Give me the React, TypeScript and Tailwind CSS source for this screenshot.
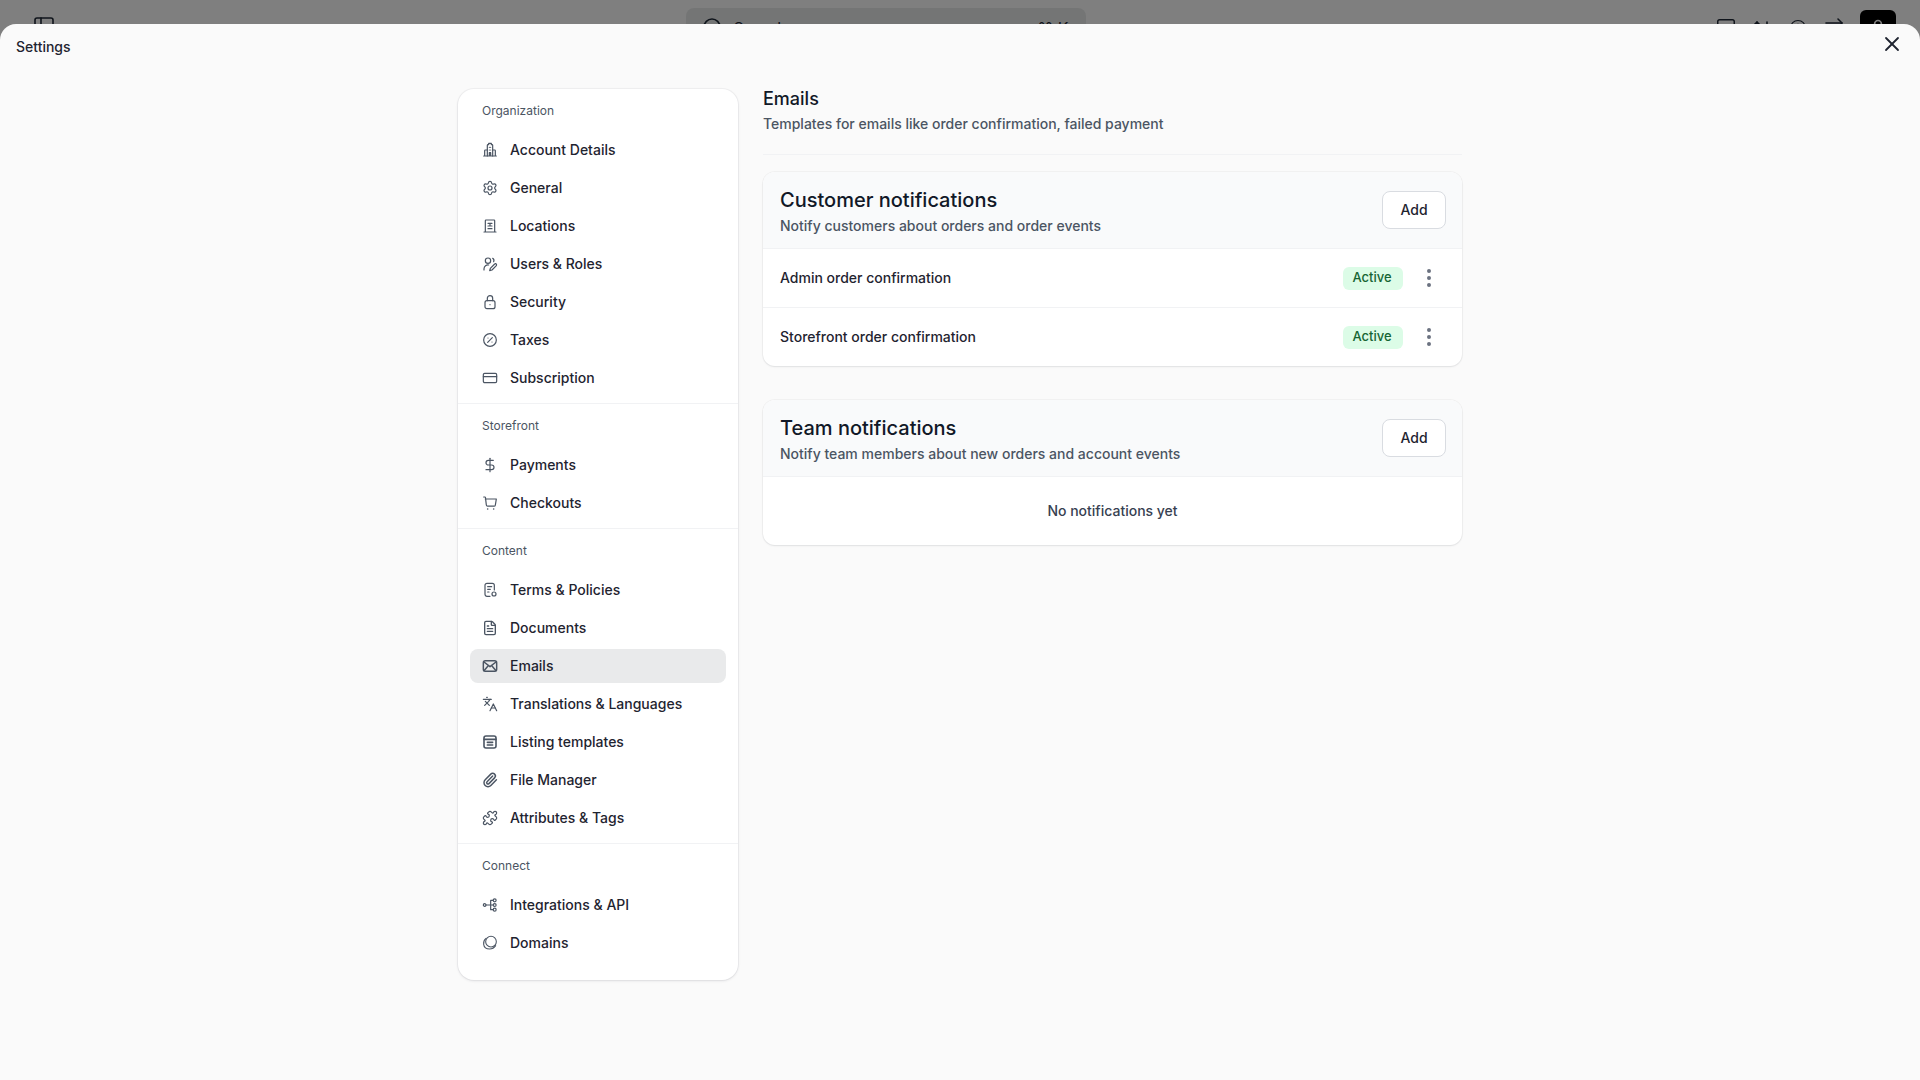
import {
  ArrowRightLeft,
  ArrowUpDown,
  CircleHelp,
  CreditCard,
  DollarSign,
  EllipsisVertical,
  FileText,
  Languages,
  PanelLeft,
  Paperclip,
  Puzzle,
  Search,
  Settings,
  Square,
  User,
  X,
  type LucideIcon,
} from 'lucide-react';
import type { ReactNode } from 'react';

const iconCls = 'size-4 shrink-0 text-[#4b5563]';

const svgProps = {
  viewBox: '0 0 24 24',
  fill: 'none',
  stroke: 'currentColor',
  strokeWidth: 1.8,
  strokeLinecap: 'round' as const,
  strokeLinejoin: 'round' as const,
  className: iconCls,
};

const TowerIcon = () => (
  <svg {...svgProps}>
    <path d="M8 21V5a1 1 0 0 1 1-1h1V2h4v2h1a1 1 0 0 1 1 1v16" />
    <path d="M8 12H5a1 1 0 0 0-1 1v8M16 12h3a1 1 0 0 1 1 1v8M2.500 21h19M11 8h.01M13 8h.01M11 12h.01M13 12h.01M11 16h2v5h-2z" />
  </svg>
);

const BuildingIcon = () => (
  <svg {...svgProps}>
    <path d="M3 21h18M5 21V4a1 1 0 0 1 1-1h12a1 1 0 0 1 1 1v17" />
    <path d="M9 8h6M9 12h6M12 8v4M9 16h6" />
  </svg>
);

const UserPenIcon = () => (
  <svg {...svgProps}>
    <circle cx="9" cy="7" r="4" />
    <path d="M3 21v-2a6 6 0 0 1 7-5.500M16 3.500a4 4 0 0 1 1.500 5" />
    <path d="M20.500 11.500a2 2 0 0 1 1 3L15 21l-3.500 1 1-3.500 6.500-6.500a1.500 1.500 0 0 1 1.500-.5z" />
  </svg>
);

const LockDotIcon = () => (
  <svg {...svgProps}>
    <rect x="4.500" y="10" width="15" height="12" rx="3" />
    <path d="M8 10V6.500a4 4 0 0 1 8 0V10M12 16h.01" />
  </svg>
);

const PercentCircleIcon = () => (
  <svg {...svgProps}>
    <circle cx="12" cy="12" r="9.500" />
    <path d="M15.500 8.500l-7 7M9 9h.01M15 15h.01" />
  </svg>
);

const BasketIcon = () => (
  <svg {...svgProps}>
    <path d="M2.500 3h1.700a1 1 0 0 1 1 .9L6.500 15a2 2 0 0 0 2 1.800h9.500a2 2 0 0 0 2-1.600L21.500 6H5" />
    <path d="M8.500 21h.01M17.500 21h.01" strokeWidth={2.4} />
  </svg>
);

const PolicyIcon = () => (
  <svg {...svgProps}>
    <path d="M12 21.500H7.500a3 3 0 0 1-3-3V5a3 3 0 0 1 3-3h8a3 3 0 0 1 3 3v7" />
    <path d="M8.500 7h6M8.500 11h4M8.500 15h2" />
    <circle cx="18" cy="18" r="3" />
  </svg>
);

const MailFlapIcon = () => (
  <svg {...svgProps} strokeWidth={2.2}>
    <rect x="2" y="4" width="20" height="16" rx="3" />
    <path d="M3 6l9 7 9-7M3 19l6-7M21 19l-6-7" />
  </svg>
);

const ListPanelIcon = () => (
  <svg {...svgProps} strokeWidth={2.4}>
    <rect x="3" y="3" width="18" height="18" rx="3" />
    <path d="M3 8h18M8 12.500h8M8 16.500h8" />
  </svg>
);

const FlowIcon = () => (
  <svg {...svgProps}>
    <circle cx="4" cy="12" r="2" />
    <circle cx="19" cy="5" r="2.200" />
    <circle cx="19" cy="12" r="2.200" />
    <circle cx="19" cy="19" r="2.200" />
    <path d="M6 12h10.800M13 5h3.800M13 19h3.800M13 5v14" />
  </svg>
);

const PlanetIcon = () => (
  <svg {...svgProps} strokeWidth={1.6}>
    <circle cx="13.500" cy="10" r="8" />
    <path d="M6 5C3.500 7 2 10 2.500 14c.5 4 4 7 9 7 4 0 7-2 9-5" />
  </svg>
);

const lucide = (Icon: LucideIcon, strokeWidth = 1.8) => (
  <Icon className={iconCls} strokeWidth={strokeWidth} />
);

interface NavGroup {
  title: string;
  items: { label: string; icon: ReactNode; active?: boolean }[];
}

const navGroups: NavGroup[] = [
  {
    title: 'Organization',
    items: [
      { label: 'Account Details', icon: <TowerIcon /> },
      { label: 'General', icon: lucide(Settings) },
      { label: 'Locations', icon: <BuildingIcon /> },
      { label: 'Users & Roles', icon: <UserPenIcon /> },
      { label: 'Security', icon: <LockDotIcon /> },
      { label: 'Taxes', icon: <PercentCircleIcon /> },
      { label: 'Subscription', icon: lucide(CreditCard) },
    ],
  },
  {
    title: 'Storefront',
    items: [
      { label: 'Payments', icon: lucide(DollarSign) },
      { label: 'Checkouts', icon: <BasketIcon /> },
    ],
  },
  {
    title: 'Content',
    items: [
      { label: 'Terms & Policies', icon: <PolicyIcon /> },
      { label: 'Documents', icon: lucide(FileText, 2) },
      { label: 'Emails', icon: <MailFlapIcon />, active: true },
      { label: 'Translations & Languages', icon: lucide(Languages) },
      { label: 'Listing templates', icon: <ListPanelIcon /> },
      { label: 'File Manager', icon: lucide(Paperclip, 2.2) },
      { label: 'Attributes & Tags', icon: lucide(Puzzle) },
    ],
  },
  {
    title: 'Connect',
    items: [
      { label: 'Integrations & API', icon: <FlowIcon /> },
      { label: 'Domains', icon: <PlanetIcon /> },
    ],
  },
];

const SettingsNav = () => (
  <nav className="mt-px w-[280px] shrink-0 self-start rounded-2xl bg-white pb-3 shadow-[0_0_0_1px_rgba(17,24,39,0.04),0_1px_3px_rgba(17,24,39,0.1)]">
    {navGroups.map((group, index) => (
      <div
        key={group.title}
        className={index > 0 ? 'border-t border-[#f1f2f4] px-3 pt-[5px] pb-2' : 'px-3 pt-[5px] pb-2'}
      >
        <p className="flex h-[34px] items-center px-3 text-xs text-[#4b5563]">{group.title}</p>
        <ul className="mt-[5px] flex flex-col gap-1">
          {group.items.map((item) => (
            <li
              key={item.label}
              className={
                item.active
                  ? 'flex h-[34px] items-center gap-3 rounded-lg bg-[#e9eaeb] px-3 text-sm font-medium text-[#1f2430]'
                  : 'flex h-[34px] items-center gap-3 rounded-lg px-3 text-sm font-medium text-[#1f2430]'
              }
            >
              {item.icon}
              {item.label}
            </li>
          ))}
        </ul>
      </div>
    ))}
  </nav>
);

const NotificationRow = ({ label }: { label: string }) => (
  <div className="flex h-[59px] items-center justify-between border-t border-[#f1f2f4] pr-[17px] pl-[17px]">
    <span className="text-sm font-medium text-[#1f2430]">{label}</span>
    <div className="flex items-center gap-[10px]">
      <span className="flex h-[23px] w-[60px] items-center justify-center rounded-md bg-[#dcfce7] pr-[2px] text-[13px] font-medium text-[#166534]">
        Active
      </span>
      <span className="flex size-8 items-center justify-center text-[#6b7280]">
        <EllipsisVertical className="size-6" strokeWidth={2} />
      </span>
    </div>
  </div>
);

interface NotificationCardProps {
  title: string;
  description: string;
  children: ReactNode;
}

const NotificationCard = ({ title, description, children }: NotificationCardProps) => (
  <section className="overflow-hidden rounded-xl bg-white shadow-[0_0_0_1px_rgba(17,24,39,0.035),0_1px_2px_rgba(17,24,39,0.08)]">
    <header className="flex h-[76px] items-center justify-between bg-[#f9fafb] pr-4 pl-[17px]">
      <div className="pt-[2px]">
        <h2 className="text-[20px] leading-7 font-medium text-[#111827]">{title}</h2>
        <p className="mt-[2px] text-sm leading-5 font-medium text-[#4b5563]">{description}</p>
      </div>
      <button className="h-[38px] w-[64px] rounded-lg border border-[#d9dce1] bg-white text-sm font-medium text-[#1f2430]">
        Add
      </button>
    </header>
    {children}
  </section>
);

const BackdropBar = () => (
  <div className="flex h-[60px] items-start justify-between bg-white pr-6 pl-8 text-[#1f2937]">
    <PanelLeft className="mt-[15px] size-6" strokeWidth={1.6} />
    <div className="mt-2 ml-[7px] flex h-10 w-[400px] items-center gap-[9px] rounded-lg bg-[#e9ebeb] pr-[17px] pl-[15px] text-base">
      <Search className="size-6" strokeWidth={1.6} />
      <span>Search</span>
      <span className="ml-auto">⌘ K</span>
    </div>
    <div className="mt-[10px] flex items-center">
      <span className="flex w-9 justify-center">
        <Square className="size-[22px]" strokeWidth={1.6} />
      </span>
      <span className="flex w-9 justify-center pt-1">
        <ArrowUpDown className="size-6" strokeWidth={1.6} />
      </span>
      <span className="flex w-9 justify-center">
        <CircleHelp className="size-[18px]" strokeWidth={1.6} />
      </span>
      <span className="flex w-9 justify-center">
        <ArrowRightLeft className="size-6" strokeWidth={1.6} />
      </span>
      <span className="ml-2 flex size-9 items-center justify-center rounded-md bg-black text-white">
        <User className="size-5" strokeWidth={2} />
      </span>
    </div>
  </div>
);

export default function App() {
  return (
    <div className="relative h-[1080px] w-full overflow-hidden font-['Inter',sans-serif]">
      <BackdropBar />
      <div className="absolute inset-0 bg-black/50" />

      <div className="absolute inset-x-0 top-6 bottom-0 rounded-t-2xl bg-[#fafafa]">
        <div className="flex h-[45px] items-center justify-between pr-4 pl-4">
          <span className="text-sm font-medium text-[#1f2430]">Settings</span>
          <X className="mb-[5px] size-6 text-[#1f2430]" strokeWidth={1.8} />
        </div>

        <div className="mt-[19px] flex justify-center gap-[25px]">
          <SettingsNav />

          <main className="w-[699px]">
            <div className="border-b border-[#f1f2f4] pb-5">
              <h1 className="text-lg leading-[22px] font-medium text-[#111827]">Emails</h1>
              <p className="mt-1 text-sm leading-5 font-medium text-[#4b5563]">
                Templates for emails like order confirmation, failed payment
              </p>
            </div>

            <div className="mt-[17px] flex flex-col gap-[34px]">
              <NotificationCard
                title="Customer notifications"
                description="Notify customers about orders and order events"
              >
                <NotificationRow label="Admin order confirmation" />
                <NotificationRow label="Storefront order confirmation" />
              </NotificationCard>

              <NotificationCard
                title="Team notifications"
                description="Notify team members about new orders and account events"
              >
                <div className="flex h-[69px] items-center justify-center border-t border-[#f1f2f4] text-sm font-medium text-[#374151]">
                  No notifications yet
                </div>
              </NotificationCard>
            </div>
          </main>
        </div>
      </div>
    </div>
  );
}
